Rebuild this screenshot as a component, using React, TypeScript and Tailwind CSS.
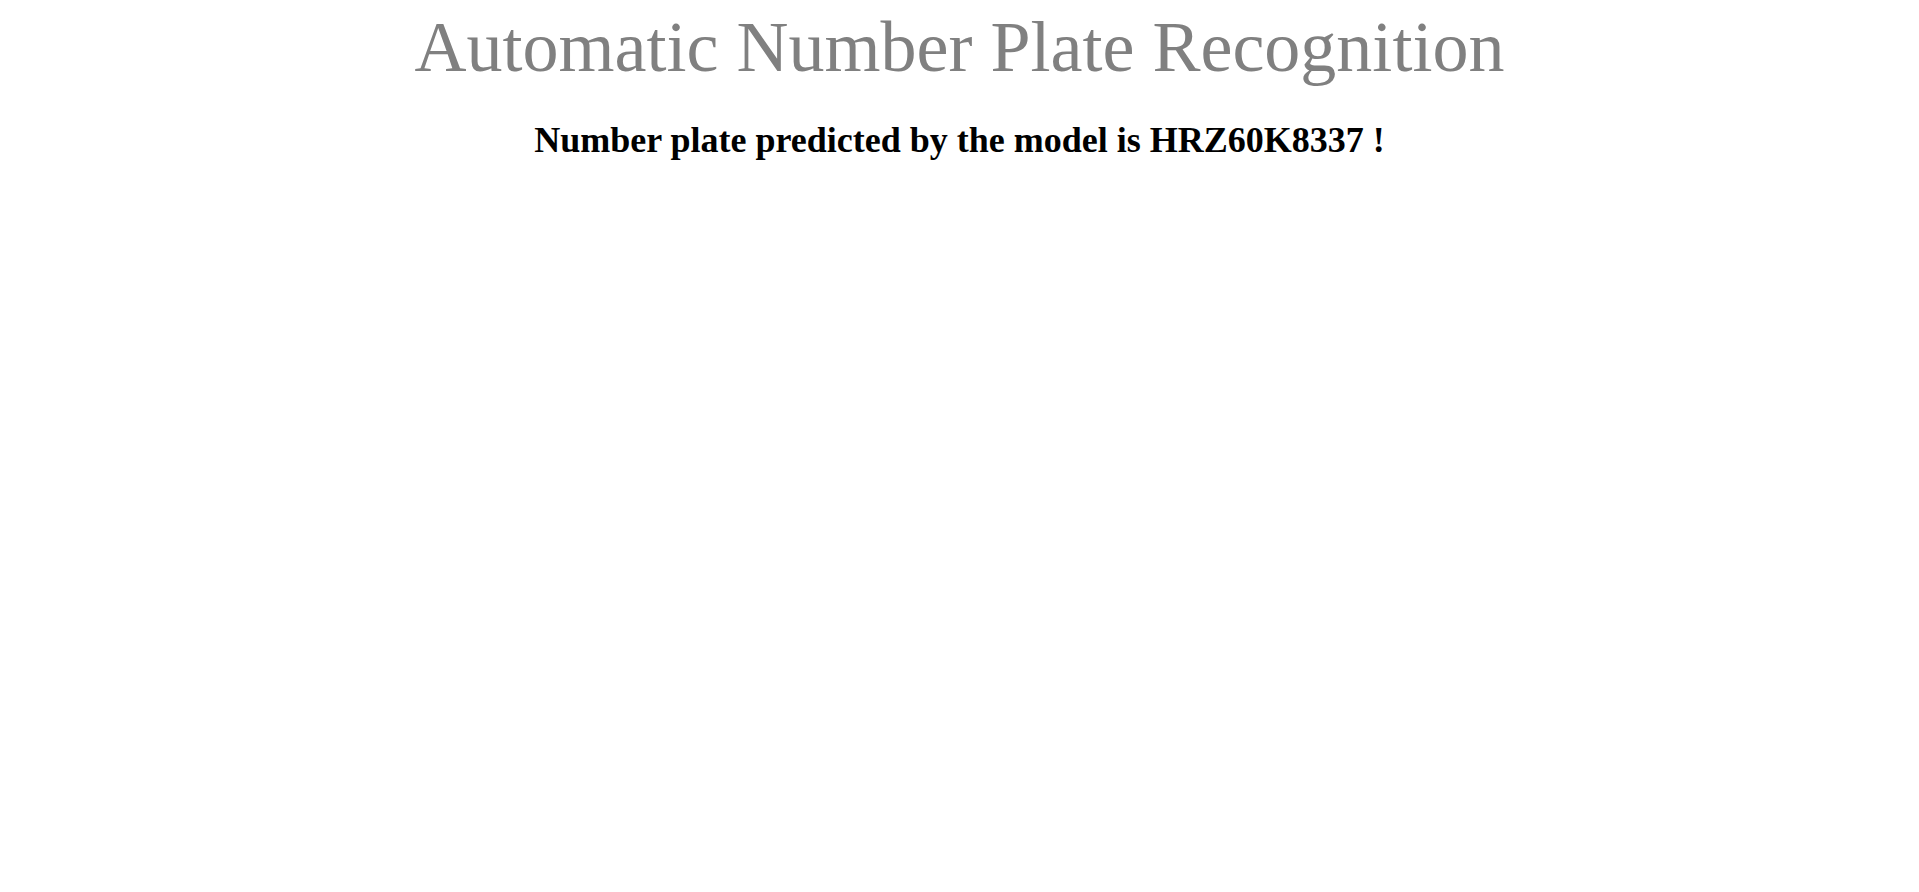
export default function App() {
  return (
    <div className="min-h-screen bg-white text-center font-['Liberation_Serif','Times_New_Roman',serif]">
      <h1 className="pt-[11px] text-[72px] leading-none text-[#808080]">Automatic Number Plate Recognition</h1>
      <h2 className="mt-[39px] text-[36px] font-bold leading-none text-black">
        Number plate predicted by the model is HRZ60K8337 !
      </h2>
    </div>
  );
}
